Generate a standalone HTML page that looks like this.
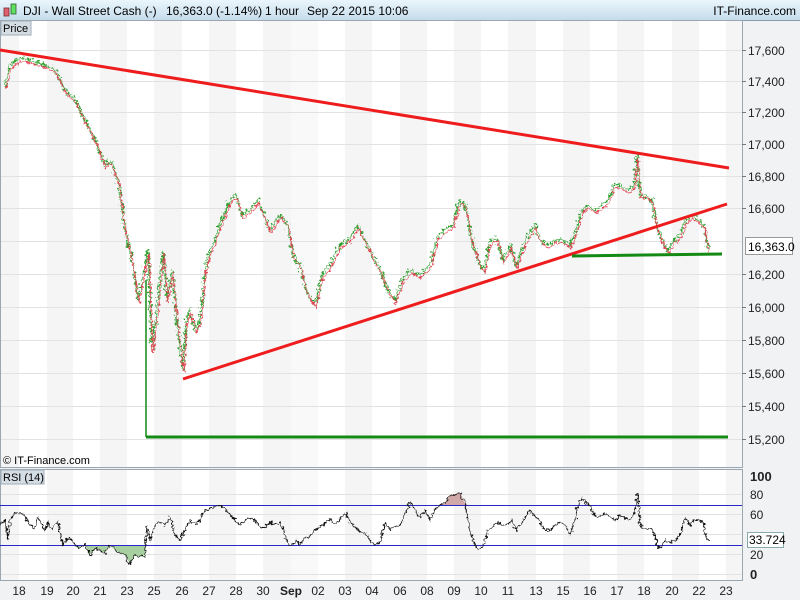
<!DOCTYPE html>
<html><head><meta charset="utf-8"><style>
html,body{margin:0;padding:0;width:800px;height:600px;overflow:hidden;background:#f0f2f4;font-family:"Liberation Sans",sans-serif}
svg text{font-family:"Liberation Sans",sans-serif}
</style></head><body>
<svg width="800" height="600" xmlns="http://www.w3.org/2000/svg">
<defs><linearGradient id="tb" x1="0" y1="0" x2="0" y2="1"><stop offset="0" stop-color="#eaf6fc"/><stop offset="1" stop-color="#c6dceb"/></linearGradient>
<filter id="jit" x="-5%" y="-5%" width="110%" height="110%"><feTurbulence type="fractalNoise" baseFrequency="0.35" numOctaves="2" seed="3" result="n"/><feDisplacementMap in="SourceGraphic" in2="n" scale="9" xChannelSelector="R" yChannelSelector="G"/></filter>
<filter id="jit2" x="-5%" y="-5%" width="110%" height="110%"><feTurbulence type="fractalNoise" baseFrequency="0.3" numOctaves="2" seed="8" result="n"/><feDisplacementMap in="SourceGraphic" in2="n" scale="6" xChannelSelector="R" yChannelSelector="G"/></filter>
</defs>
<rect width="800" height="600" fill="#f0f2f4"/>
<rect x="0" y="0" width="800" height="20" fill="url(#tb)"/>
<line x1="0" y1="20.5" x2="800" y2="20.5" stroke="#8a9cab"/>
<rect x="4" y="8" width="5" height="8" fill="#e06070" stroke="#703030" stroke-width="0.8"/>
<rect x="11" y="4" width="5" height="10" fill="#60e060" stroke="#306030" stroke-width="0.8"/>
<g font-size="12" fill="#000">
<text x="23" y="15">DJI - Wall Street Cash (-)</text>
<text x="166" y="15">16,363.0 (-1.14%)</text>
<text x="265" y="15">1 hour</text>
<text x="307" y="15">Sep 22 2015 10:06</text>
<text x="796" y="15" text-anchor="end">IT-Finance.com</text>
</g>
<rect x="0" y="21" width="742" height="446" fill="#fff"/>
<rect x="0" y="470" width="742" height="110" fill="#fff"/>
<g fill="#f5f5f5">
<rect x="0" y="21" width="19" height="446"/><rect x="47" y="21" width="26" height="446"/><rect x="100" y="21" width="27" height="446"/><rect x="154" y="21" width="28" height="446"/><rect x="209" y="21" width="27" height="446"/><rect x="263" y="21" width="28" height="446"/><rect x="291" y="21" width="27" height="446" fill="#f9f9f9"/><rect x="345" y="21" width="27" height="446"/><rect x="400" y="21" width="27" height="446"/><rect x="454" y="21" width="27" height="446"/><rect x="508" y="21" width="28" height="446"/><rect x="563" y="21" width="27" height="446"/><rect x="617" y="21" width="27" height="446"/><rect x="672" y="21" width="27" height="446"/><rect x="726" y="21" width="16" height="446"/>
<rect x="0" y="470" width="19" height="110"/><rect x="47" y="470" width="26" height="110"/><rect x="100" y="470" width="27" height="110"/><rect x="154" y="470" width="28" height="110"/><rect x="209" y="470" width="27" height="110"/><rect x="263" y="470" width="28" height="110"/><rect x="291" y="470" width="27" height="110" fill="#f9f9f9"/><rect x="345" y="470" width="27" height="110"/><rect x="400" y="470" width="27" height="110"/><rect x="454" y="470" width="27" height="110"/><rect x="508" y="470" width="28" height="110"/><rect x="563" y="470" width="27" height="110"/><rect x="617" y="470" width="27" height="110"/><rect x="672" y="470" width="27" height="110"/><rect x="726" y="470" width="16" height="110"/>
</g>
<g stroke="#e2e2e2" stroke-width="1">
<line x1="0" y1="50.5" x2="742" y2="50.5"/><line x1="0" y1="81.5" x2="742" y2="81.5"/><line x1="0" y1="112.5" x2="742" y2="112.5"/><line x1="0" y1="144.5" x2="742" y2="144.5"/><line x1="0" y1="176.5" x2="742" y2="176.5"/><line x1="0" y1="208.5" x2="742" y2="208.5"/><line x1="0" y1="241.5" x2="742" y2="241.5"/><line x1="0" y1="274.5" x2="742" y2="274.5"/><line x1="0" y1="307.5" x2="742" y2="307.5"/><line x1="0" y1="340.5" x2="742" y2="340.5"/><line x1="0" y1="373.5" x2="742" y2="373.5"/><line x1="0" y1="406.5" x2="742" y2="406.5"/><line x1="0" y1="439.5" x2="742" y2="439.5"/>
<line x1="0" y1="494.5" x2="742" y2="494.5"/><line x1="0" y1="514.5" x2="742" y2="514.5"/><line x1="0" y1="534.5" x2="742" y2="534.5"/><line x1="0" y1="554.5" x2="742" y2="554.5"/><line x1="0" y1="574.5" x2="742" y2="574.5"/>
</g>
<g stroke="#9aa6b0" fill="none">
<rect x="0.5" y="20.5" width="742" height="447"/>
<rect x="0.5" y="469.5" width="742" height="111"/>
</g>
<g filter="url(#jit)">
<polyline fill="none" stroke="#2ca02c" stroke-width="1.4" points="5,85 10,65 20,58 30,60 45,65 55,70 65,90 75,100 85,120 95,140 105,165 110,160 118,180 125,230 132,260 138,300 142,280 148,250 152,350 158,300 163,250 167,300 172,270 178,330 183,370 186,320 190,310 195,330 200,320 205,270 210,250 215,240 220,225 230,200 236,195 242,215 250,210 258,200 264,215 270,230 280,215 288,225 293,255 300,265 306,290 315,305 322,275 330,265 340,245 350,238 358,225 365,240 372,255 380,270 388,290 395,300 402,280 410,270 420,275 430,265 438,235 445,230 452,225 460,200 465,205 472,240 478,260 484,270 490,240 497,238 503,260 510,245 516,265 522,250 528,235 535,225 540,240 548,245 555,240 562,240 570,245 576,230 582,210 588,205 595,210 602,205 608,200 614,185 620,185 628,190 634,185 637,155 640,195 646,195 652,200 656,225 662,240 668,250 674,240 680,235 686,220 692,215 698,220 704,225 708,250"/>
</g>
<g filter="url(#jit2)">
<polyline fill="none" stroke="#e04050" stroke-width="1" points="6,88 11,68 21,61 31,63 46,68 56,73 66,93 76,103 86,123 96,143 106,168 111,163 119,183 126,233 133,263 139,303 143,283 149,253 153,353 159,303 164,253 168,303 173,273 179,333 184,373 187,323 191,313 196,333 201,323 206,273 211,253 216,243 221,228 231,203 237,198 243,218 251,213 259,203 265,218 271,233 281,218 289,228 294,258 301,268 307,293 316,308 323,278 331,268 341,248 351,241 359,228 366,243 373,258 381,273 389,293 396,303 403,283 411,273 421,278 431,268 439,238 446,233 453,228 461,203 466,208 473,243 479,263 485,273 491,243 498,241 504,263 511,248 517,268 523,253 529,238 536,228 541,243 549,248 556,243 563,243 571,248 577,233 583,213 589,208 596,213 603,208 609,203 615,188 621,188 629,193 635,188 638,158 641,198 647,198 653,203 657,228 663,243 669,253 675,243 681,238 687,223 693,218 699,223 705,228 709,252"/>
</g>
<line x1="0" y1="50" x2="729" y2="168" stroke="#ee1c1c" stroke-width="3"/>
<line x1="183" y1="379" x2="727" y2="204" stroke="#ee1c1c" stroke-width="3"/>
<line x1="146" y1="437" x2="728" y2="437" stroke="#138a13" stroke-width="3"/>
<line x1="146" y1="280" x2="146" y2="437" stroke="#138a13" stroke-width="1.5"/>
<line x1="572" y1="256" x2="722" y2="254" stroke="#138a13" stroke-width="3"/>
<rect x="1" y="21" width="30" height="14" fill="#d4dde4" stroke="#a0adb8"/>
<text x="3" y="32" font-size="11">Price</text>
<text x="3" y="464" font-size="11">© IT-Finance.com</text>
<rect x="1" y="470" width="43" height="14" fill="#d4dde4" stroke="#a0adb8"/>
<text x="3" y="481" font-size="11">RSI (14)</text>
<polygon fill="#a8cfa0" points="63,545 67,545 72,545 78,548 85,545 90,555 95,548 100,550 105,553 110,545 115,550 120,553 125,555 130,564 135,555 140,557 145,555 146,545"/>
<polygon fill="#d0a8a8" points="440,505 445,503 450,495 460,493 465,503 468,505"/>
<line x1="0" y1="505.5" x2="742" y2="505.5" stroke="#2828c8"/>
<line x1="0" y1="545.5" x2="742" y2="545.5" stroke="#2828c8"/>
<g filter="url(#jit2)">
<polyline fill="none" stroke="#111" stroke-width="1.1" points="0,525 5,520 8,540 10,520 15,513 22,513 25,517 30,525 35,528 38,517 45,530 48,522 52,530 58,522 63,545 67,538 72,540 78,548 85,545 90,555 95,548 100,550 105,553 110,545 115,550 120,553 125,555 130,564 135,555 140,557 145,555 147,525 150,540 155,525 160,522 165,525 170,517 175,535 180,540 185,530 190,520 195,525 200,520 205,510 212,508 218,505 225,508 230,515 235,520 240,525 245,520 250,518 255,520 260,527 265,528 270,522 275,525 280,522 283,528 288,545 292,545 296,540 300,545 305,538 310,536 315,530 320,527 325,523 330,520 335,525 340,520 345,513 352,525 358,530 362,533 366,533 370,540 375,545 380,543 385,522 390,530 395,527 400,525 405,515 410,502 415,510 420,518 425,510 430,520 435,510 440,505 445,503 450,495 460,493 465,503 470,530 475,545 478,548 483,547 488,530 493,527 498,522 502,525 508,525 512,520 515,530 520,525 525,518 530,510 535,517 540,522 545,530 550,530 555,525 560,522 565,525 570,535 575,520 578,505 582,498 585,503 590,505 595,517 600,516 605,513 610,517 615,520 620,515 625,518 630,520 634,513 638,493 640,525 645,528 650,528 655,535 658,548 662,545 665,540 670,542 675,541 680,535 685,518 690,525 693,520 697,520 703,522 707,540 710,541"/>
</g>
<g font-size="12" fill="#222">
<text x="748" y="55">17,600</text><text x="748" y="86">17,400</text><text x="748" y="117">17,200</text><text x="748" y="149">17,000</text><text x="748" y="181">16,800</text><text x="748" y="213">16,600</text><text x="748" y="279">16,200</text><text x="748" y="312">16,000</text><text x="748" y="345">15,800</text><text x="748" y="378">15,600</text><text x="748" y="411">15,400</text><text x="748" y="444">15,200</text>
<text x="750" y="481" font-weight="bold" font-size="13">100</text><text x="750" y="499">80</text><text x="750" y="519">60</text><text x="750" y="559">20</text><text x="750" y="579" font-weight="bold" font-size="13">0</text>
</g>
<g stroke="#777"><line x1="742" y1="50.5" x2="746" y2="50.5"/><line x1="742" y1="81.5" x2="746" y2="81.5"/><line x1="742" y1="112.5" x2="746" y2="112.5"/><line x1="742" y1="144.5" x2="746" y2="144.5"/><line x1="742" y1="176.5" x2="746" y2="176.5"/><line x1="742" y1="208.5" x2="746" y2="208.5"/><line x1="742" y1="274.5" x2="746" y2="274.5"/><line x1="742" y1="307.5" x2="746" y2="307.5"/><line x1="742" y1="340.5" x2="746" y2="340.5"/><line x1="742" y1="373.5" x2="746" y2="373.5"/><line x1="742" y1="406.5" x2="746" y2="406.5"/><line x1="742" y1="439.5" x2="746" y2="439.5"/></g>
<rect x="745.5" y="237.5" width="47" height="17" fill="#fff" stroke="#999"/>
<text x="748" y="251" font-size="12">16,363.0</text>
<rect x="747.5" y="532.5" width="36" height="15" fill="#fff" stroke="#8aa"/>
<text x="749" y="544" font-size="12">33.724</text>
<g font-size="12" fill="#222" text-anchor="middle">
<text x="19" y="595">18</text><text x="47" y="595">19</text><text x="73" y="595">20</text><text x="100" y="595">21</text><text x="127" y="595">23</text><text x="154" y="595">25</text><text x="182" y="595">26</text><text x="209" y="595">27</text><text x="236" y="595">28</text><text x="263" y="595">30</text><text x="291" y="595" font-weight="bold">Sep</text><text x="318" y="595">02</text><text x="345" y="595">03</text><text x="372" y="595">04</text><text x="400" y="595">06</text><text x="427" y="595">08</text><text x="454" y="595">09</text><text x="481" y="595">10</text><text x="508" y="595">11</text><text x="536" y="595">13</text><text x="563" y="595">15</text><text x="590" y="595">16</text><text x="617" y="595">17</text><text x="644" y="595">18</text><text x="672" y="595">20</text><text x="699" y="595">22</text><text x="726" y="595">23</text>
</g>
</svg>
</body></html>
